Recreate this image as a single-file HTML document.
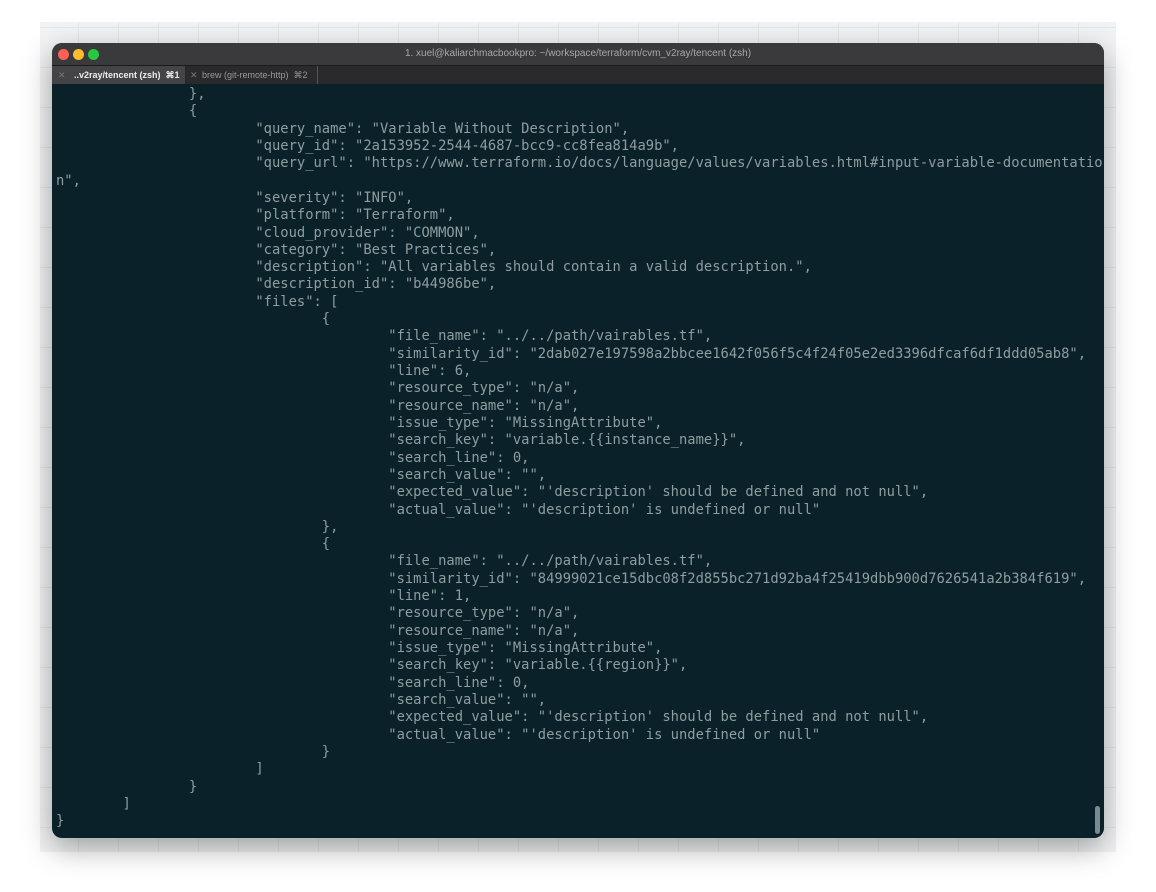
<!DOCTYPE html>
<html><head><meta charset="utf-8"><style>
html,body{margin:0;padding:0;width:1156px;height:892px;background:#fff;overflow:hidden}
.bg{position:absolute;left:40px;top:22px;width:1076px;height:830px;background-color:#f1f3f4;
background-image:linear-gradient(#dfe8ec 1px,transparent 1px),linear-gradient(90deg,#dfe8ec 1px,transparent 1px);background-size:40px 40px;background-position:-2px 5px;}
.win{position:absolute;left:52px;top:43px;width:1052px;height:795px;border-radius:10px;overflow:hidden;background:#0b2129;box-shadow:0 10px 30px rgba(0,0,0,.35)}
.title{height:22px;background:#3a3a3c;color:#a8a8a8;font:10px "Liberation Sans",sans-serif;text-align:center;line-height:22px;position:relative}
.dot{position:absolute;top:6px;width:11px;height:11px;border-radius:50%}
.tabs{height:18px;background:#2a2a2c;border-top:1px solid #1a1a1a;position:relative;font:9px "Liberation Sans",sans-serif;color:#999}
.tab1{position:absolute;left:0;top:0;width:133px;height:18px;background:#444446;color:#eee}
.tab2{position:absolute;left:133px;top:0;width:132px;height:18px;border-right:1px solid #555}
.tabs span{position:absolute;top:4px}
pre{position:absolute;left:4px;top:43px;margin:0;font:13.8px "DejaVu Sans Mono",monospace;line-height:17.31px;color:#8e9d9f;white-space:pre}
.sb{position:absolute;right:4px;bottom:4px;width:5px;height:28px;border-radius:3px;background:#7a8a8e}
</style></head><body>
<div class="bg"></div>
<div class="win">
<div class="title"><div class="dot" style="left:6px;background:#fe5f57"></div><div class="dot" style="left:21px;background:#febc2e"></div><div class="dot" style="left:36px;background:#28c840"></div>1. xuel@kaliarchmacbookpro: ~/workspace/terraform/cvm_v2ray/tencent (zsh)</div>
<div class="tabs"><div class="tab1"><span style="left:6px;color:#777">✕</span><span style="left:22px;font-weight:bold">..v2ray/tencent (zsh) &nbsp;⌘1</span></div><div class="tab2"><span style="left:5px;color:#777">✕</span><span style="left:17px">brew (git-remote-http) &nbsp;⌘2</span></div></div>
<pre>                },
                {
                        "query_name": "Variable Without Description",
                        "query_id": "2a153952-2544-4687-bcc9-cc8fea814a9b",
                        "query_url": "https://www.terraform.io/docs/language/values/variables.html#input-variable-documentatio
n",
                        "severity": "INFO",
                        "platform": "Terraform",
                        "cloud_provider": "COMMON",
                        "category": "Best Practices",
                        "description": "All variables should contain a valid description.",
                        "description_id": "b44986be",
                        "files": [
                                {
                                        "file_name": "../../path/vairables.tf",
                                        "similarity_id": "2dab027e197598a2bbcee1642f056f5c4f24f05e2ed3396dfcaf6df1ddd05ab8",
                                        "line": 6,
                                        "resource_type": "n/a",
                                        "resource_name": "n/a",
                                        "issue_type": "MissingAttribute",
                                        "search_key": "variable.{{instance_name}}",
                                        "search_line": 0,
                                        "search_value": "",
                                        "expected_value": "'description' should be defined and not null",
                                        "actual_value": "'description' is undefined or null"
                                },
                                {
                                        "file_name": "../../path/vairables.tf",
                                        "similarity_id": "84999021ce15dbc08f2d855bc271d92ba4f25419dbb900d7626541a2b384f619",
                                        "line": 1,
                                        "resource_type": "n/a",
                                        "resource_name": "n/a",
                                        "issue_type": "MissingAttribute",
                                        "search_key": "variable.{{region}}",
                                        "search_line": 0,
                                        "search_value": "",
                                        "expected_value": "'description' should be defined and not null",
                                        "actual_value": "'description' is undefined or null"
                                }
                        ]
                }
        ]
}</pre>
<div class="sb"></div>
</div>
</body></html>
